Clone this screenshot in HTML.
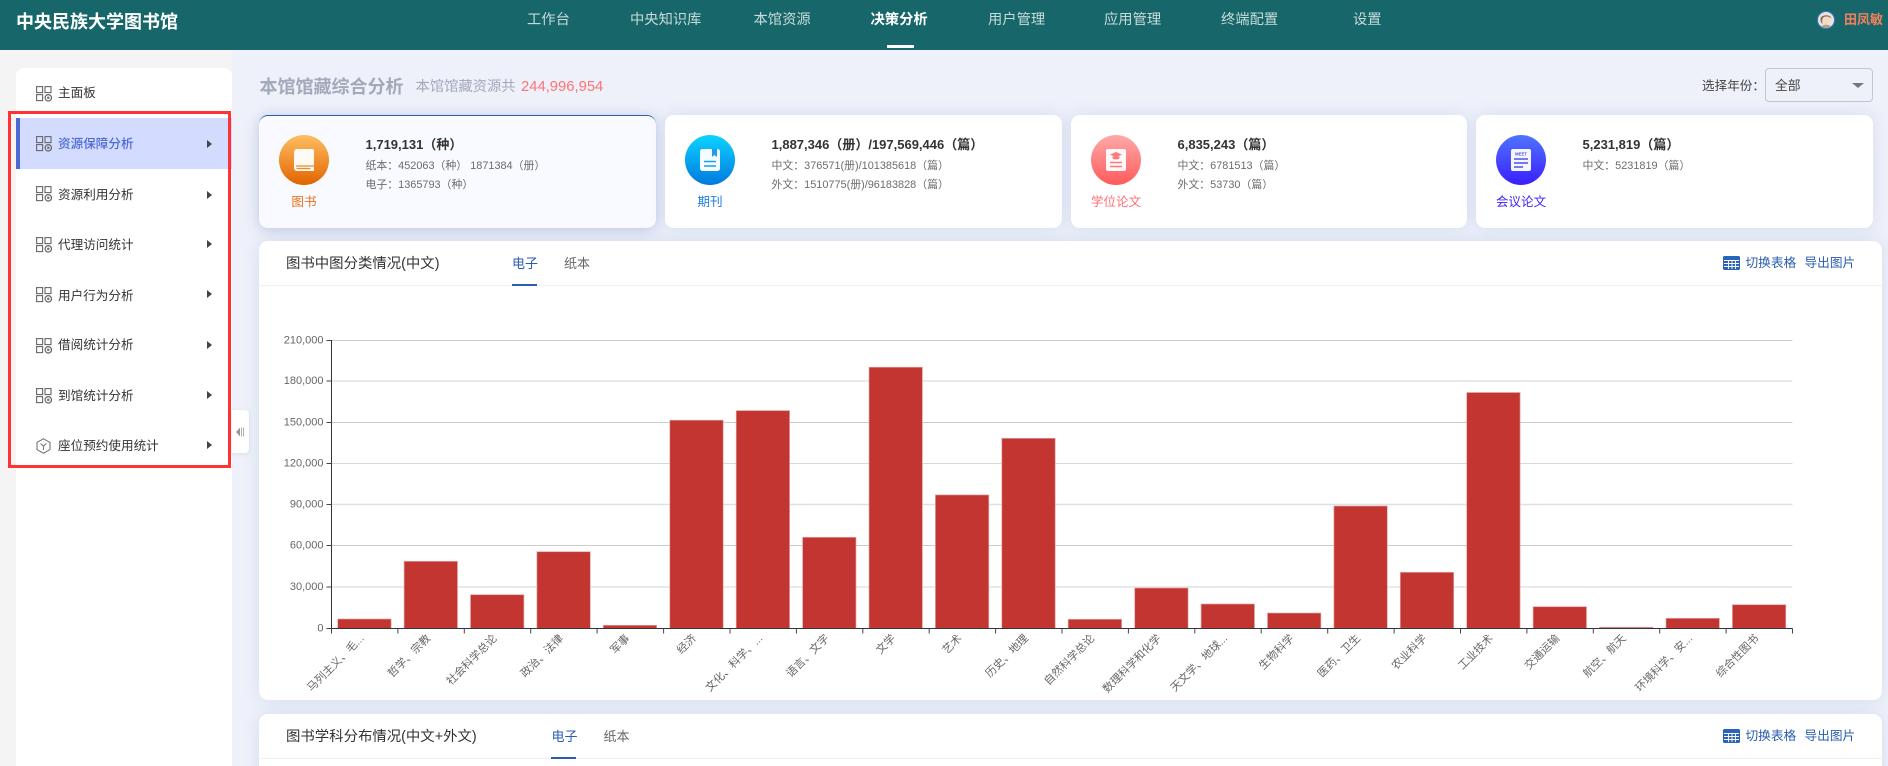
<!DOCTYPE html>
<html lang="zh"><head><meta charset="utf-8"><title>本馆馆藏综合分析</title>
<style>
*{box-sizing:border-box}
html,body{margin:0;padding:0;width:1888px;height:766px;overflow:hidden;background:#eef1f9;font-family:"Liberation Sans","Noto Sans CJK SC",sans-serif;color:#333}
#root{position:relative;width:1888px;height:766px;overflow:hidden;background:#eef1f9}
.a{position:absolute;white-space:nowrap}
#hd{position:absolute;left:0;top:0;width:1888px;height:50px;background:#17676a}
.nav{position:absolute;top:9px;line-height:22px;font-size:14.3px;color:#c8dbdb;white-space:nowrap}
#side{position:absolute;left:0;top:50px;width:232px;height:716px;background:#f4f4f5}
#menu{position:absolute;left:16px;top:68px;width:216px;height:698px;background:#fff;border-radius:8px 8px 0 0}
.mi{position:absolute;left:58px;font-size:12.6px;line-height:20px;color:#333;white-space:nowrap}
.ic{position:absolute;left:36px;width:16px;height:16px}
.tri{position:absolute;left:207px;width:0;height:0;border-left:5px solid #444;border-top:4px solid transparent;border-bottom:4px solid transparent}
.card{position:absolute;top:115px;width:397px;height:113px;background:#fff;border-radius:9px;box-shadow:0 0 16px rgba(90,120,200,.16)}
.circ{position:absolute;left:20px;top:20px;width:50px;height:50px;border-radius:50%}
.circ svg{position:absolute;left:0;top:0}
.lab{position:absolute;left:0;width:90px;text-align:center;top:77px;font-size:12.6px;line-height:20px}
.t1{position:absolute;left:106.5px;top:20px;font-size:13px;font-weight:bold;line-height:20px;color:#333;white-space:nowrap}
.t2{position:absolute;left:106.5px;font-size:10.9px;line-height:16px;color:#6c6c6c;white-space:nowrap}
.panel{position:absolute;left:259px;width:1623px;background:#fff;border-radius:9px;box-shadow:0 0 16px rgba(90,120,200,.16)}
.ph{position:absolute;left:0;top:0;width:100%;height:45px;border-bottom:1px solid #eef0f7}
.ttl{position:absolute;left:27px;top:13px;line-height:20px;font-size:14.4px;color:#333;white-space:nowrap}
.tab{position:absolute;top:13px;line-height:20px;font-size:13px;color:#666;white-space:nowrap}
.tab.on{color:#2a5db0}
.ul{position:absolute;top:43px;height:2px;background:#2a5db0}
.act{position:absolute;top:12px;line-height:20px;font-size:12.7px;color:#2a5db0;white-space:nowrap}
</style></head><body>
<div id="root">

<div id="side"></div>
<div id="menu"></div>

<div id="hd">
  <div class="a" style="left:16px;top:10px;font-size:18px;line-height:24px;font-weight:bold;color:#fff">中央民族大学图书馆</div>
  <div class="nav" style="left:527px">工作台</div>
  <div class="nav" style="left:630px">中央知识库</div>
  <div class="nav" style="left:753.5px">本馆资源</div>
  <div class="nav" style="left:870.5px;color:#fff;font-weight:bold">决策分析</div>
  <div class="a" style="left:886.5px;top:45px;width:27px;height:3px;background:#fff"></div>
  <div class="nav" style="left:988px">用户管理</div>
  <div class="nav" style="left:1104px">应用管理</div>
  <div class="nav" style="left:1221px">终端配置</div>
  <div class="nav" style="left:1353px">设置</div>
  <svg class="a" style="left:1817px;top:11px" width="18" height="18" viewBox="0 0 18 18"><circle cx="9" cy="9" r="8.5" fill="#e9e4dc" stroke="#3f78c4" stroke-width="1"/><path d="M3.5 8C3.5 3.5 14 2.5 14.5 8 13 5.500 9 5 7 6 5 7 5 10 5.500 13 4 12 3.500 10 3.500 8Z" fill="#8b6b4e"/><ellipse cx="9.500" cy="9.500" rx="3.200" ry="3.800" fill="#f3d9c4"/><path d="M4.500 15.500C6 13 12 13 13.500 15.500 11 17.500 7 17.500 4.500 15.500Z" fill="#b9a17c"/></svg>
  <div class="a" style="left:1844px;top:9px;font-size:13px;line-height:22px;font-weight:bold;color:#f47f5c">田凤敏</div>
</div>

<!-- sidebar items -->
<div class="a" style="left:16px;top:118px;width:216px;height:51px;background:#d3dcff"></div>
<div class="a" style="left:16px;top:118px;width:4px;height:51px;background:#4c6ad6"></div>

<svg width="0" height="0" style="position:absolute"><defs>
<g id="gi"><g fill="none" stroke="#666" stroke-width="1.100"><rect x=".6" y=".6" width="6" height="6"/><rect x="9" y=".6" width="6" height="6"/><rect x=".6" y="8.600" width="6" height="6"/><circle cx="12.300" cy="11.800" r="3.200" stroke-width="1.200"/></g><circle cx="12.300" cy="11.800" r="1.300" fill="#777"/></g>
</defs></svg>

<svg class="ic" style="top:86px" viewBox="0 0 16 16"><use href="#gi"/></svg>
<div class="mi" style="top:83px">主面板</div>

<svg class="ic" style="top:136px" viewBox="0 0 16 16"><use href="#gi"/></svg>
<div class="mi" style="top:134px;color:#4c6ad6;font-weight:500">资源保障分析</div>
<div class="tri" style="top:140px"></div>

<svg class="ic" style="top:186px" viewBox="0 0 16 16"><use href="#gi"/></svg>
<div class="mi" style="top:185px">资源利用分析</div>
<div class="tri" style="top:191px"></div>

<svg class="ic" style="top:237px" viewBox="0 0 16 16"><use href="#gi"/></svg>
<div class="mi" style="top:235px">代理访问统计</div>
<div class="tri" style="top:240px"></div>

<svg class="ic" style="top:287px" viewBox="0 0 16 16"><use href="#gi"/></svg>
<div class="mi" style="top:285.500px">用户行为分析</div>
<div class="tri" style="top:290px"></div>

<svg class="ic" style="top:338px" viewBox="0 0 16 16"><use href="#gi"/></svg>
<div class="mi" style="top:335px">借阅统计分析</div>
<div class="tri" style="top:341px"></div>

<svg class="ic" style="top:388px" viewBox="0 0 16 16"><use href="#gi"/></svg>
<div class="mi" style="top:386px">到馆统计分析</div>
<div class="tri" style="top:391px"></div>

<svg class="ic" style="top:438px" viewBox="0 0 16 16"><path d="M7.500.8 14 4.400v7.200L7.500 15.200 1 11.600V4.400Z M4.500 5.500 7.500 8l3-2.500 M7.500 8v4" fill="none" stroke="#777" stroke-width="1.100"/></svg>
<div class="mi" style="top:436px">座位预约使用统计</div>
<div class="tri" style="top:441px"></div>

<div class="a" style="left:8px;top:111px;width:223px;height:357px;border:3px solid #f33"></div>

<div class="a" style="left:232px;top:410px;width:17px;height:43px;background:#fff;border-radius:0 4px 4px 0;box-shadow:0 1px 4px rgba(90,110,170,.15)"></div>
<svg class="a" style="left:235px;top:426px" width="10" height="12" viewBox="0 0 10 12"><path d="M5 1.500V10.500L1 6Z" fill="#999"/><path d="M6.500 1.500v9M8.500 1.500v9" stroke="#aaa" stroke-width="1"/></svg>

<!-- title row -->
<div class="a" style="left:259.500px;top:74px;font-size:18px;line-height:26px;font-weight:bold;color:#a3a9bb">本馆馆藏综合分析</div>
<div class="a" style="left:415.500px;top:76px;font-size:14.300px;line-height:22px;color:#a3a9bb">本馆馆藏资源共</div>
<div class="a" style="left:521px;top:76px;font-size:14.800px;line-height:22px;color:#ff7276">244,996,954</div>

<div class="a" style="left:1702px;top:76px;font-size:12.600px;line-height:20px;color:#444">选择年份：</div>
<div class="a" style="left:1765px;top:68px;width:108px;height:34px;border:1px solid #c2c6cf;border-radius:4px"></div>
<div class="a" style="left:1775px;top:76px;font-size:12.800px;line-height:20px;color:#444">全部</div>
<div class="a" style="left:1852px;top:83px;width:0;height:0;border-top:5px solid #777;border-left:6px solid transparent;border-right:6px solid transparent"></div>

<!-- cards -->
<div class="card" style="left:259px;background:#f8faff;border-top:1px solid #2a5db0;box-shadow:0 2px 14px rgba(60,90,170,.28)">
  <div class="circ" style="top:19px;background:linear-gradient(#ffbe60,#e26400)">
    <svg width="50" height="50" viewBox="0 0 50 50"><path d="M15 17a3 3 0 0 1 3-3h15a2 2 0 0 1 2 2v20H18a3 3 0 0 1-3-3Z" fill="#fff" opacity=".95"/><path d="M17 31h18M17.500 33.500h14" stroke="#ee8a2c" stroke-width="1.200"/></svg>
  </div>
  <div class="lab" style="top:76px;color:#e8721e">图书</div>
  <div class="t1" style="top:19px">1,719,131（种）</div>
  <div class="t2" style="top:42px">纸本：452063（种） 1871384（册）</div>
  <div class="t2" style="top:61px">电子：1365793（种）</div>
</div>

<div class="card" style="left:665px">
  <div class="circ" style="background:linear-gradient(#0cd3ff,#0079e0)">
    <svg width="50" height="50" viewBox="0 0 50 50"><rect x="15" y="14" width="20" height="22" rx="2.500" fill="#fff" opacity=".96"/><path d="M27 14h5v8l-2.500-2-2.500 2Z" fill="#1aa0ee"/><path d="M19 26.500h12M19 31h12" stroke="#1aa0ee" stroke-width="1.600"/></svg>
  </div>
  <div class="lab" style="color:#1e80e6">期刊</div>
  <div class="t1">1,887,346（册）/197,569,446（篇）</div>
  <div class="t2" style="top:43px">中文：376571(册)/101385618（篇）</div>
  <div class="t2" style="top:62px">外文：1510775(册)/96183828（篇）</div>
</div>

<div class="card" style="left:1071px;width:396px">
  <div class="circ" style="background:linear-gradient(#ffa9a9,#ff5a5a)">
    <svg width="50" height="50" viewBox="0 0 50 50"><rect x="15" y="14" width="20" height="22" rx="2" fill="#fff" opacity=".95"/><path d="M25 17l6 2.600-6 2.600-6-2.600Z" fill="#ff7a7a"/><path d="M21.500 21.500v2c2 1.200 5 1.200 7 0v-2" fill="#ff7a7a"/><path d="M19 27.500h12M19 31.500h12" stroke="#ff7a7a" stroke-width="1.400"/></svg>
  </div>
  <div class="lab" style="color:#ff6f72">学位论文</div>
  <div class="t1">6,835,243（篇）</div>
  <div class="t2" style="top:43px">中文：6781513（篇）</div>
  <div class="t2" style="top:62px">外文：53730（篇）</div>
</div>

<div class="card" style="left:1476px;width:397px">
  <div class="circ" style="background:linear-gradient(#4f74ff,#3a1fff)">
    <svg width="50" height="50" viewBox="0 0 50 50"><rect x="15" y="14" width="20" height="22" rx="2" fill="#fff" opacity=".95"/><text x="25" y="20.500" text-anchor="middle" font-size="4.200" font-weight="bold" fill="#4a50ee" font-family="Liberation Sans">MEET</text><path d="M18 24h14M18 28h14M18 32h9" stroke="#4a50ee" stroke-width="1.500"/></svg>
  </div>
  <div class="lab" style="color:#3d22ff">会议论文</div>
  <div class="t1">5,231,819（篇）</div>
  <div class="t2" style="top:43px">中文：5231819（篇）</div>
</div>

<!-- panel 1 -->
<div class="panel" style="top:241px;height:459px">
  <div class="ph"></div>
  <div class="ttl">图书中图分类情况(中文)</div>
  <div class="tab on" style="left:253px">电子</div>
  <div class="ul" style="left:253px;width:25px"></div>
  <div class="tab" style="left:305px">纸本</div>
  <svg class="a" style="left:1464px;top:15px" width="17" height="14" viewBox="0 0 17 14"><rect width="17" height="14" rx="1.500" fill="#2a64b8"/><path d="M1 4.500h15M1 7.500h15M1 10.500h15M5.500 4v9M9 4v9M12.500 4v9" stroke="#fff" stroke-width=".9"/></svg>
  <div class="act" style="left:1486.500px">切换表格</div>
  <div class="act" style="left:1545.500px">导出图片</div>
</div>

<!-- panel 2 -->
<div class="panel" style="top:714px;height:80px">
  <div class="ph" style="height:45px"></div>
  <div class="ttl">图书学科分布情况(中文+外文)</div>
  <div class="tab on" style="left:292.500px">电子</div>
  <div class="ul" style="left:292px;width:25px"></div>
  <div class="tab" style="left:344.500px">纸本</div>
  <svg class="a" style="left:1464px;top:15px" width="17" height="14" viewBox="0 0 17 14"><rect width="17" height="14" rx="1.500" fill="#2a64b8"/><path d="M1 4.500h15M1 7.500h15M1 10.500h15M5.500 4v9M9 4v9M12.500 4v9" stroke="#fff" stroke-width=".9"/></svg>
  <div class="act" style="left:1486.500px">切换表格</div>
  <div class="act" style="left:1545.500px">导出图片</div>
</div>

<!-- chart -->
<svg class="a" style="left:0;top:0" width="1888" height="766" viewBox="0 0 1888 766">
  <g fill="none">
    <path d="M331.500 340.500H1792.500" stroke="#ccc"/>
    <path d="M331.500 381H1792.500" stroke="#e4e4e4" stroke-width="1.500"/>
    <path d="M331.500 422.500H1792.500" stroke="#ccc"/>
    <path d="M331.500 463.500H1792.500" stroke="#d8d8d8"/>
    <path d="M331.500 504.500H1792.500" stroke="#e0e0e0" stroke-width="1.500"/>
    <path d="M331.500 545.500H1792.500" stroke="#ccc"/>
    <path d="M331.500 587H1792.500" stroke="#e4e4e4" stroke-width="1.500"/>
  </g>
  <g fill="#c23531" stroke="#e2a6a4" stroke-width=".7">
    <rect x="337.700" y="619" width="53.400" height="9.500"/>
    <rect x="404.100" y="561.300" width="53.400" height="67"/>
    <rect x="470.500" y="594.700" width="53.400" height="33.600"/>
    <rect x="536.900" y="551.700" width="53.400" height="76.600"/>
    <rect x="603.300" y="625.300" width="53.400" height="3"/>
    <rect x="669.800" y="420.200" width="53.400" height="208.100"/>
    <rect x="736.200" y="410.600" width="53.400" height="217.700"/>
    <rect x="802.600" y="537.300" width="53.400" height="91"/>
    <rect x="869" y="367.200" width="53.400" height="261.100"/>
    <rect x="935.400" y="494.900" width="53.400" height="133.400"/>
    <rect x="1001.800" y="438.300" width="53.400" height="190"/>
    <rect x="1068.200" y="619.300" width="53.400" height="9"/>
    <rect x="1134.700" y="588" width="53.400" height="40.300"/>
    <rect x="1201.100" y="604" width="53.400" height="24.300"/>
    <rect x="1267.500" y="613" width="53.400" height="15.300"/>
    <rect x="1333.900" y="506" width="53.400" height="122.300"/>
    <rect x="1400.300" y="572.300" width="53.400" height="56"/>
    <rect x="1466.700" y="392.500" width="53.400" height="235.800"/>
    <rect x="1533.100" y="606.700" width="53.400" height="21.600"/>
    <rect x="1599.500" y="627.300" width="53.400" height="1"/>
    <rect x="1666" y="618.300" width="53.400" height="10"/>
    <rect x="1732.400" y="604.700" width="53.400" height="23.600"/>
  </g>
  <path d="M331.500 340V628.500H1792.500" fill="none" stroke="#333" stroke-width="1"/>
  <path d="M326.500 340.500h5M326.500 381h5M326.500 422.500h5M326.500 463.500h5M326.500 504.500h5M326.500 545.500h5M326.500 587h5M326.500 628.500h5M331.500 628.500v5M397.900 628.500v5M464.300 628.500v5M530.700 628.500v5M597.100 628.500v5M663.600 628.500v5M730 628.500v5M796.400 628.500v5M862.800 628.500v5M929.200 628.500v5M995.600 628.500v5M1062 628.500v5M1128.400 628.500v5M1194.800 628.500v5M1261.200 628.500v5M1327.700 628.500v5M1394.100 628.500v5M1460.500 628.500v5M1526.900 628.500v5M1593.300 628.500v5M1659.700 628.500v5M1726.100 628.500v5M1792.500 628.500v5" fill="none" stroke="#444" stroke-width="1"/>
  <g font-family="'Liberation Sans','Noto Sans CJK SC',sans-serif" font-size="11" fill="#666" text-anchor="end">
    <text x="323.500" y="343.500">210,000</text>
    <text x="323.500" y="384">180,000</text>
    <text x="323.500" y="425.500">150,000</text>
    <text x="323.500" y="466.500">120,000</text>
    <text x="323.500" y="507.500">90,000</text>
    <text x="323.500" y="548.500">60,000</text>
    <text x="323.500" y="590">30,000</text>
    <text x="323.500" y="631.500">0</text>
    <g>
    <text transform="translate(364.700 639) rotate(-45)">马列主义、毛...</text>
    <text transform="translate(431.100 639) rotate(-45)">哲学、宗教</text>
    <text transform="translate(497.500 639) rotate(-45)">社会科学总论</text>
    <text transform="translate(563.900 639) rotate(-45)">政治、法律</text>
    <text transform="translate(630.300 639) rotate(-45)">军事</text>
    <text transform="translate(696.800 639) rotate(-45)">经济</text>
    <text transform="translate(763.200 639) rotate(-45)">文化、科学、...</text>
    <text transform="translate(829.600 639) rotate(-45)">语言、文字</text>
    <text transform="translate(896 639) rotate(-45)">文学</text>
    <text transform="translate(962.400 639) rotate(-45)">艺术</text>
    <text transform="translate(1028.800 639) rotate(-45)">历史、地理</text>
    <text transform="translate(1095.200 639) rotate(-45)">自然科学总论</text>
    <text transform="translate(1161.700 639) rotate(-45)">数理科学和化学</text>
    <text transform="translate(1228.100 639) rotate(-45)">天文学、地球...</text>
    <text transform="translate(1294.500 639) rotate(-45)">生物科学</text>
    <text transform="translate(1360.900 639) rotate(-45)">医药、卫生</text>
    <text transform="translate(1427.300 639) rotate(-45)">农业科学</text>
    <text transform="translate(1493.700 639) rotate(-45)">工业技术</text>
    <text transform="translate(1560.100 639) rotate(-45)">交通运输</text>
    <text transform="translate(1626.500 639) rotate(-45)">航空、航天</text>
    <text transform="translate(1693 639) rotate(-45)">环境科学、安...</text>
    <text transform="translate(1759.400 639) rotate(-45)">综合性图书</text>
    </g>
  </g>
</svg>
</div>
</body></html>
